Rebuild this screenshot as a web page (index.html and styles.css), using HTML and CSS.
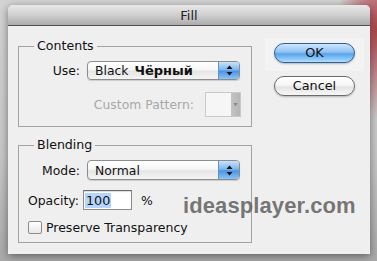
FILE: index.html
```html
<!DOCTYPE html>
<html>
<head>
<meta charset="utf-8">
<link rel="stylesheet" href="styles.css">
</head>
<body>
<div class="dialog">
  <div class="titlebar">Fill</div>
  <div class="content">
    <div class="left">
      <fieldset class="group contents">
        <legend>Contents</legend>
        <div class="row row-use">
          <span class="lbl">Use:</span>
          <div class="popup">
            <span class="val">Black <b class="ru">Чёрный</b></span>
            <span class="arrows"><svg width="7" height="11" viewBox="0 0 7 11"><path d="M3.5 0.5 L6.5 4 L0.5 4 Z" fill="#111"/><path d="M0.5 7 L6.5 7 L3.5 10.5 Z" fill="#111"/></svg></span>
          </div>
        </div>
        <div class="row row-pattern">
          <span class="lbl disabled">Custom Pattern:</span>
          <div class="pattern"><span class="pattern-arrow"><svg width="5" height="5" viewBox="0 0 5 5"><path d="M0.5 1 L4.5 1 L2.5 4.5 Z" fill="#8a8a8a"/></svg></span></div>
        </div>
      </fieldset>
      <fieldset class="group blending">
        <legend>Blending</legend>
        <div class="row row-mode">
          <span class="lbl">Mode:</span>
          <div class="popup">
            <span class="val">Normal</span>
            <span class="arrows"><svg width="7" height="11" viewBox="0 0 7 11"><path d="M3.5 0.5 L6.5 4 L0.5 4 Z" fill="#111"/><path d="M0.5 7 L6.5 7 L3.5 10.5 Z" fill="#111"/></svg></span>
          </div>
        </div>
        <div class="row row-opacity">
          <span class="lbl-left">Opacity:</span>
          <div class="input"><span class="sel">100</span></div>
          <span class="pct">%</span>
        </div>
        <div class="row row-check">
          <span class="checkbox"></span>
          <span class="check-label">Preserve Transparency</span>
        </div>
      </fieldset>
    </div>
    <div class="buttons">
      <div class="default-ring"><div class="btn ok">OK</div></div>
      <div class="btn cancel">Cancel</div>
    </div>
  </div>
  <div class="watermark">ideasplayer.com</div>
</div>
</body>
</html>
```

FILE: styles.css
```css
html, body {
  margin: 0;
  padding: 0;
}
body {
  width: 377px;
  height: 261px;
  overflow: hidden;
  font-family: "DejaVu Sans", "Noto Sans", sans-serif;
  font-size: 12.4px;
  color: #111;
  background:
    radial-gradient(ellipse 40px 90px at 377px 30px, rgba(170, 40, 50, 0.85), rgba(170, 40, 50, 0) 100%),
    linear-gradient(180deg, #d4d4d4 0%, #c8c8c8 60%, #a9a9a9 100%);
  padding: 5px 7px 0 8px;
  box-sizing: border-box;
}
.dialog {
  position: relative;
  width: 362px;
  height: 249px;
  background: #efefef;
  border-radius: 5px 5px 0 0;
  box-shadow: 0 2px 8px rgba(0, 0, 0, 0.45);
  display: flex;
  flex-direction: column;
}
.titlebar {
  height: 20px;
  border-bottom: 1px solid #505050;
  border-radius: 5px 5px 0 0;
  background: linear-gradient(180deg, #e8e8e8 0%, #cfcfcf 50%, #acacac 100%);
  text-align: center;
  font-size: 13px;
  line-height: 21px;
  color: #222;
}
.content {
  display: flex;
  padding: 12px 15px 0 10px;
}
.left {
  display: flex;
  flex-direction: column;
  width: 234px;
}
.group {
  margin: 0;
  padding: 0;
  border: 1px solid #a3a3a3;
  min-width: 0;
}
.group legend {
  margin-left: 15px;
  padding: 0 3px;
  line-height: 16px;
  font-size: 12.6px;
  color: #111;
}
.contents {
  padding: 0 11px 9px 0;
}
.blending {
  margin-top: 10px;
  padding: 0 11px 7px 0;
}
.row {
  display: flex;
  align-items: center;
}
.lbl {
  width: 61px;
  text-align: right;
  margin-right: 7px;
}
.disabled {
  color: #a8a8a8;
}
.popup {
  flex: 1;
  height: 19px;
  box-sizing: border-box;
  border: 1px solid #8c8c8c;
  border-radius: 4px;
  background: linear-gradient(180deg, #ffffff 0%, #f6f6f6 45%, #e6e6e6 55%, #f4f4f4 100%);
  display: flex;
  align-items: center;
  overflow: hidden;
  box-shadow: 0 1px 1px rgba(0, 0, 0, 0.15);
}
.val {
  flex: 1;
  padding-left: 7px;
}
.ru {
  font-family: "DejaVu Sans", sans-serif;
  font-weight: bold;
  font-size: 13px;
  margin-left: 2px;
}
.arrows {
  width: 20px;
  height: 100%;
  border-left: 1px solid #6c8fb8;
  background: linear-gradient(180deg, #c8e2fb 0%, #7fb6ef 45%, #4a95e6 55%, #8cc4f6 100%);
  display: flex;
  align-items: center;
  justify-content: center;
}
.row-use {
  margin-top: 7px;
}
.row-pattern {
  margin-top: 12px;
  justify-content: flex-end;
}
.row-pattern .lbl {
  width: auto;
  margin-right: 11px;
}
.pattern {
  width: 36px;
  height: 25px;
  box-sizing: border-box;
  border: 1px solid #c9c9c9;
  background: #f6f6f6;
  display: flex;
  justify-content: flex-end;
  margin-right: -1px;
}
.pattern-arrow {
  width: 9px;
  background: linear-gradient(90deg, #c4c4c4, #b6b6b6);
  display: flex;
  align-items: center;
  justify-content: center;
}
.row-mode {
  margin-top: 7px;
}
.row-mode .popup {
  height: 20px;
}
.row-opacity {
  margin-top: 10px;
  padding-left: 9px;
}
.lbl-left {
  margin-right: 4px;
}
.input {
  width: 49px;
  height: 20px;
  box-sizing: border-box;
  border: 1px solid #8a8a8a;
  border-top-color: #6a6a6a;
  background: #fff;
  display: flex;
  align-items: center;
  padding-left: 1px;
  box-shadow: inset 0 1px 1px rgba(0, 0, 0, 0.15);
}
.sel {
  background: #b5d5ff;
  padding: 0 1px;
  line-height: 15px;
  font-size: 12.8px;
}
.pct {
  margin-left: 9px;
}
.row-check {
  margin-top: 10px;
  padding-left: 9px;
}
.checkbox {
  width: 14px;
  height: 13px;
  box-sizing: border-box;
  border: 1px solid #8c8c8c;
  border-radius: 2px;
  background: linear-gradient(180deg, #ffffff, #e8e8e8);
  margin-right: 4px;
}
.check-label {
  font-size: 12.5px;
}
.buttons {
  display: flex;
  flex-direction: column;
  margin-left: 22px;
  margin-top: 5px;
}
.default-ring {
  margin: -5px -9px 0 -9px;
  padding: 5px 9px 8px 9px;
  background: #f3f3f3;
}
.btn {
  width: 81px;
  height: 20px;
  box-sizing: border-box;
  border-radius: 10px;
  text-align: center;
  font-size: 12.8px;
  line-height: 18px;
  color: #111;
}
.ok {
  border: 1px solid #2f5f9a;
  background: linear-gradient(180deg, #cfe6fd 0%, #8fc2f4 45%, #5aa3ea 55%, #8ccaf9 85%, #b8e0fd 100%);
  box-shadow: 0 1px 2px rgba(0, 0, 0, 0.25);
}
.cancel {
  margin-top: 5px;
  border: 1px solid #6c6c6c;
  background: linear-gradient(180deg, #ffffff 0%, #f6f6f6 45%, #e4e4e4 55%, #f7f7f7 100%);
  box-shadow: 0 1px 2px rgba(0, 0, 0, 0.25);
}
.watermark {
  position: absolute;
  left: 175px;
  top: 188px;
  font-family: "Liberation Sans", Arial, sans-serif;
  font-weight: bold;
  font-size: 22px;
  line-height: 25px;
  color: rgba(95, 95, 95, 0.85);
  letter-spacing: 0.1px;
}
```
